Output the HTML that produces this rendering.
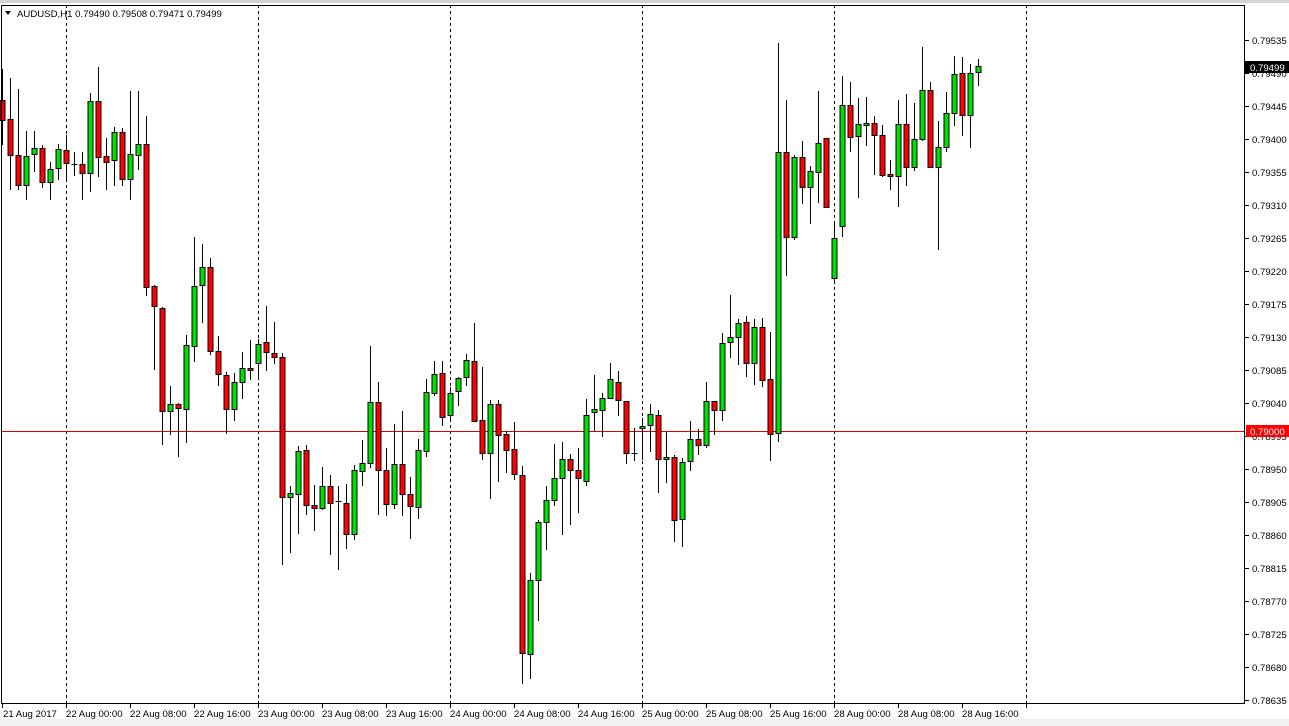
<!DOCTYPE html>
<html><head><meta charset="utf-8"><style>
html,body{margin:0;padding:0;background:#fff;overflow:hidden}
svg{display:block}
text{font-family:"Liberation Sans",Arial,sans-serif;font-size:9.6px;fill:#000}
</style></head><body>
<svg id="s" width="1289" height="726" xmlns="http://www.w3.org/2000/svg">
<rect x="0" y="0" width="1289" height="726" fill="#fff"/>
<rect x="0" y="0" width="1289" height="3" fill="#d4d4d4"/>
<rect x="0" y="719" width="1289" height="7" fill="#f0f0f0"/>
<g stroke="#000" stroke-dasharray="3,3" stroke-width="1">
<line x1="66.5" y1="5" x2="66.5" y2="703"/><line x1="258.5" y1="5" x2="258.5" y2="703"/>
<line x1="450.5" y1="5" x2="450.5" y2="703"/><line x1="642.5" y1="5" x2="642.5" y2="703"/>
<line x1="834.5" y1="5" x2="834.5" y2="703"/><line x1="1026.5" y1="5" x2="1026.5" y2="703"/>
</g>
<line x1="1" y1="431.5" x2="1245" y2="431.5" stroke="#e00000" stroke-width="1"/>
<g id="c"></g>
<rect x="1.5" y="5.5" width="1243" height="698" fill="none" stroke="#000"/>
<polygon points="5,11 11,11 8,15" fill="#000"/>
<text x="17" y="17">AUDUSD,H1  0.79490 0.79508 0.79471 0.79499</text>
<g id="yl">
<text x="1252" y="44">0.79535</text><text x="1252" y="77">0.79490</text><text x="1252" y="110">0.79445</text>
<text x="1252" y="143">0.79400</text><text x="1252" y="176">0.79355</text><text x="1252" y="209">0.79310</text>
<text x="1252" y="242">0.79265</text><text x="1252" y="275">0.79220</text><text x="1252" y="308">0.79175</text>
<text x="1252" y="341">0.79130</text><text x="1252" y="374">0.79085</text><text x="1252" y="407">0.79040</text>
<text x="1252" y="440">0.78995</text><text x="1252" y="473">0.78950</text><text x="1252" y="506">0.78905</text>
<text x="1252" y="539">0.78860</text><text x="1252" y="572">0.78815</text><text x="1252" y="605">0.78770</text>
<text x="1252" y="638">0.78725</text><text x="1252" y="671">0.78680</text><text x="1252" y="704">0.78635</text>
</g>
<g stroke="#000"><path id="yt" d=""/></g>
<rect x="1245" y="61" width="44" height="12" fill="#000"/>
<text x="1250" y="71" style="fill:#fff">0.79499</text>
<rect x="1246" y="425" width="43" height="12" fill="#ff0000"/>
<text x="1250" y="435" style="fill:#fff">0.79000</text>
<g>
<text x="3" y="717">21 Aug 2017</text>
<text x="66" y="717">22 Aug 00:00</text><text x="130" y="717">22 Aug 08:00</text><text x="194" y="717">22 Aug 16:00</text>
<text x="258" y="717">23 Aug 00:00</text><text x="322" y="717">23 Aug 08:00</text><text x="386" y="717">23 Aug 16:00</text>
<text x="450" y="717">24 Aug 00:00</text><text x="514" y="717">24 Aug 08:00</text><text x="578" y="717">24 Aug 16:00</text>
<text x="642" y="717">25 Aug 00:00</text><text x="706" y="717">25 Aug 08:00</text><text x="770" y="717">25 Aug 16:00</text>
<text x="834" y="717">28 Aug 00:00</text><text x="898" y="717">28 Aug 08:00</text><text x="962" y="717">28 Aug 16:00</text>
</g>
<g stroke="#000"><path id="xt" d=""/></g>
</svg>
<script>
var d=[
[2,100,120,69,145,'r'],[10,119,155,78,190,'r'],[18,155,185,89,190,'r'],[26,156,185,131,200,'g'],[34,148,154,131,172,'g'],[42,148,182,145,188,'r'],[50,169,182,162,200,'g'],[58,149,168,144,180,'g'],[66,150,163,135,182,'r'],[74,164,164,152,176,'d'],[82,164,173,152,200,'r'],[90,101,173,93,192,'g'],[98,101,157,67,177,'r'],[106,156,162,138,190,'r'],[114,132,160,127,186,'g'],[122,132,179,128,186,'r'],[130,154,179,91,200,'g'],[138,144,155,91,170,'g'],[146,144,287,116,296,'r'],
[154,286,306,285,370,'r'],[162,308,411,307,445,'r'],[170,404,411,386,435,'g'],[178,404,408,403,457,'r'],[186,345,409,335,443,'g'],[194,286,346,237,362,'g'],[202,267,285,244,323,'g'],[210,267,351,258,355,'r'],[218,351,374,336,386,'r'],[226,375,409,372,434,'r'],[234,382,409,373,421,'g'],[242,368,382,352,399,'g'],[250,368,370,340,380,'r'],[258,344,363,339,380,'g'],[266,342,352,306,371,'r'],[274,353,357,322,364,'r'],[282,357,497,353,565,'r'],[290,493,497,486,553,'g'],[298,451,494,446,534,'g'],[306,450,505,445,515,'r'],[314,505,508,485,531,'r'],[322,486,508,467,510,'g'],[330,486,503,475,555,'r'],[338,501,501,486,570,'d'],[346,503,534,484,549,'r'],[354,470,534,465,540,'g'],[362,463,471,440,486,'g'],[370,402,463,346,468,'g'],[378,402,470,382,515,'r'],[386,470,504,448,516,'r'],[394,464,504,424,509,'g'],[402,464,494,411,516,'r'],[410,494,506,477,539,'r'],[418,450,507,439,519,'g'],[426,392,451,379,457,'g'],[434,374,393,361,396,'g'],
[442,373,417,361,426,'r'],[450,393,415,387,421,'g'],[458,378,391,377,406,'g'],[466,360,377,354,386,'g'],[474,361,421,323,421,'r'],[482,420,453,367,460,'r'],[490,404,453,400,499,'g'],[498,404,435,400,482,'r'],[506,434,450,431,473,'r'],[514,449,474,422,480,'r'],[522,475,653,466,684,'r'],[530,580,654,573,679,'g'],[538,522,580,520,621,'g'],[546,500,522,486,550,'g'],[554,478,500,444,506,'g'],[562,459,478,442,535,'g'],[570,459,470,454,525,'r'],[578,470,478,448,513,'r'],[586,415,481,399,486,'g'],[594,409,412,375,431,'g'],[602,398,410,393,437,'g'],[610,379,398,363,398,'g'],[618,382,400,371,416,'r'],[626,401,453,401,464,'r'],[634,453,453,428,461,'d'],[642,426,428,418,460,'g'],[650,414,425,404,452,'g'],[658,415,459,410,493,'r'],[666,457,459,432,483,'g'],[674,457,520,455,542,'r'],[682,462,519,458,547,'g'],[690,439,461,421,471,'g'],[698,439,445,429,455,'r'],[706,401,445,382,448,'g'],
[714,401,410,401,435,'r'],[722,343,410,333,421,'g'],[730,337,342,295,358,'g'],[738,323,337,319,365,'g'],[746,322,363,316,377,'r'],[754,327,363,319,385,'g'],[762,327,380,318,387,'r'],[770,379,434,332,461,'r'],[778,152,433,43,442,'g'],[786,152,237,100,276,'r'],[794,157,237,155,240,'g'],[802,157,187,141,204,'r'],[810,171,187,166,224,'g'],[818,143,172,91,203,'g'],[826,138,207,138,207,'r'],[834,238,278,221,283,'g'],[842,105,226,76,237,'g'],[850,105,137,82,152,'r'],[858,124,136,98,198,'g'],[866,123,125,97,146,'g'],[874,123,135,116,175,'r'],[882,135,175,125,177,'r'],[890,174,176,160,190,'r'],[898,124,176,100,207,'g'],[906,124,167,94,186,'r'],[914,139,167,103,171,'g'],[922,90,139,47,141,'g'],[930,90,167,82,167,'r'],[938,147,167,121,250,'g'],[946,113,147,92,152,'g'],[954,74,113,56,126,'g'],[962,73,115,57,136,'r'],[970,73,115,64,148,'g'],[978,66,72,59,86,'g']];
var h='';
d.forEach(function(c){var x=c[0]+0.5;
h+='<line x1="'+x+'" y1="'+c[3]+'" x2="'+x+'" y2="'+c[4]+'" stroke="#000"/>';
if(c[5]=='d'){h+='<line x1="'+(x-3)+'" y1="'+(c[1]+0.5)+'" x2="'+(x+3)+'" y2="'+(c[1]+0.5)+'" stroke="#000"/>';}
else{h+='<rect x="'+(x-2.5)+'" y="'+(c[1]+0.5)+'" width="5" height="'+Math.max(1,c[2]-c[1])+'" fill="'+(c[5]=='g'?'#00e000':'#ff0000')+'" stroke="#000"/>';}
});
document.getElementById('c').innerHTML=h;
var p='';for(var i=0;i<21;i++){var y=40.5+i*33;p+='M1245 '+y+'H1249';}
document.getElementById('yt').setAttribute('d',p);
var q='M2.5 704V708';for(var i=0;i<16;i++){var x=66.5+i*64;q+='M'+x+' 704V708';}
document.getElementById('xt').setAttribute('d',q);
</script>
</body></html>
